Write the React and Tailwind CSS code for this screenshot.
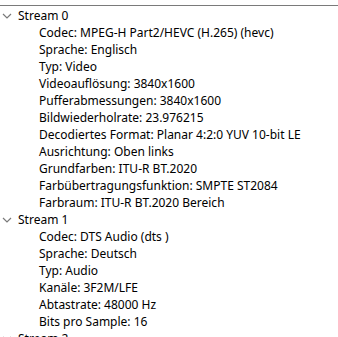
import React from 'react';

const streams = [
  {
    name: 'Stream 0',
    items: [
      'Codec: MPEG-H Part2/HEVC (H.265) (hevc)',
      'Sprache: Englisch',
      'Typ: Video',
      'Videoauflösung: 3840x1600',
      'Pufferabmessungen: 3840x1600',
      'Bildwiederholrate: 23.976215',
      'Decodiertes Format: Planar 4:2:0 YUV 10-bit LE',
      'Ausrichtung: Oben links',
      'Grundfarben: ITU-R BT.2020',
      'Farbübertragungsfunktion: SMPTE ST2084',
      'Farbraum: ITU-R BT.2020 Bereich',
    ],
  },
  {
    name: 'Stream 1',
    items: [
      'Codec: DTS Audio (dts )',
      'Sprache: Deutsch',
      'Typ: Audio',
      'Kanäle: 3F2M/LFE',
      'Abtastrate: 48000 Hz',
      'Bits pro Sample: 16',
    ],
  },
  { name: 'Stream 2', items: [] },
];

function Chevron() {
  return (
    <svg width="10" height="6" viewBox="0 0 10 6" className="shrink-0">
      <path d="M1 1 L5 5 L9 1" fill="none" stroke="#7a7a7a" strokeWidth="1.2" />
    </svg>
  );
}

export default function App() {
  return (
    <div
      className="w-[338px] h-[337px] overflow-hidden bg-white text-black text-[12px]"
      style={{ fontFamily: '"Noto Sans", "Open Sans", sans-serif' }}
    >
      <div className="mt-[5px] h-px bg-[#7a7a7a]" />
      <div className="pt-[1px]">
        {streams.map((s) => (
          <div key={s.name}>
            <div className="flex items-center h-[17px] pl-[2px] gap-[6px] whitespace-nowrap">
              <Chevron />
              <span>{s.name}</span>
            </div>
            {s.items.map((it) => (
              <div key={it} className="h-[17px] leading-[17px] pl-[39px] whitespace-nowrap">
                {it}
              </div>
            ))}
          </div>
        ))}
      </div>
    </div>
  );
}
